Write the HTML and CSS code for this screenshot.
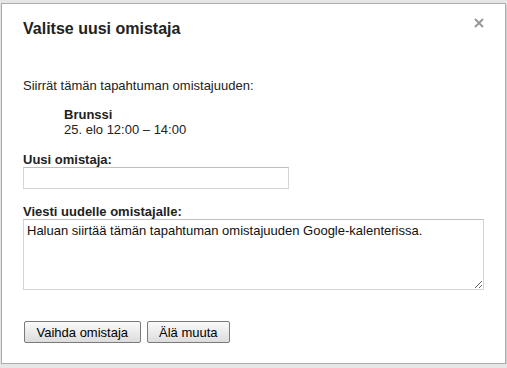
FILE: index.html
```html
<!DOCTYPE html>
<html lang="fi">
<head>
<meta charset="UTF-8">
<title>Valitse uusi omistaja</title>
<link rel="stylesheet" href="styles.css">
</head>
<body>
<div class="dialog">
    <div class="dialog-header">
        <h1 class="dialog-title">Valitse uusi omistaja</h1>
        <button class="close-btn" title="Sulje">
            <svg width="10" height="10" viewBox="0 0 10 10"><path d="M1 1L9 9M9 1L1 9" stroke="#999" stroke-width="2"/></svg>
        </button>
    </div>
    <p class="intro">Siirrät tämän tapahtuman omistajuuden:</p>
    <div class="event">
        <div class="event-name">Brunssi</div>
        <div class="event-time">25. elo 12:00 – 14:00</div>
    </div>
    <label class="field-label" for="owner">Uusi omistaja:</label>
    <input class="owner-input" id="owner" type="text">
    <label class="field-label" for="message">Viesti uudelle omistajalle:</label>
    <textarea class="message-input" id="message">Haluan siirtää tämän tapahtuman omistajuuden Google-kalenterissa.</textarea>
    <div class="actions">
        <button class="btn">Vaihda omistaja</button>
        <button class="btn">Älä muuta</button>
    </div>
</div>
</body>
</html>
```
FILE: styles.css
```css
body {
    margin: 0;
    padding: 3px 0 0 1px;
    background-color: #e6e6e6;
    font-family: 'Liberation Sans', Arial, sans-serif;
    font-size: 13px;
    line-height: 15px;
    color: #222;
    overflow: hidden;
}
.dialog {
    width: 462px;
    padding: 15px 20px 20px 21px;
    background-color: #fff;
    border: 1px solid #acacac;
    box-shadow: 1px 2px 2px rgba(0, 0, 0, 0.15);
}
.dialog-header {
    display: flex;
    justify-content: space-between;
    align-items: flex-start;
}
.dialog-title {
    margin: 0;
    font-size: 16px;
    line-height: 20px;
    font-weight: 700;
    color: #222;
}
.close-btn {
    margin: -1px 1px 0 0;
    padding: 0;
    border: none;
    background: none;
    width: 10px;
    height: 10px;
    cursor: pointer;
}
.close-btn svg {
    display: block;
}
.intro {
    margin: 39px 0 0;
}
.event {
    margin: 14px 0 0 41px;
}
.event-name {
    font-weight: 700;
}
.field-label {
    display: block;
    margin-top: 15px;
    font-weight: 700;
}
.owner-input {
    display: block;
    box-sizing: border-box;
    width: 266px;
    height: 22px;
    margin: 0;
    border: 1px solid #d4d4d4;
    border-top-color: #c0c0c0;
    font: inherit;
}
.message-input {
    display: block;
    box-sizing: border-box;
    width: 461px;
    height: 71px;
    margin: 0;
    padding: 3px;
    border: 1px solid #d4d4d4;
    border-top-color: #c0c0c0;
    font-family: inherit;
    font-size: 13px;
    line-height: 15px;
    color: #111;
    resize: both;
}
.actions {
    display: flex;
    gap: 6px;
    margin-top: 31px;
    padding-left: 1px;
}
.btn {
    height: 22px;
    padding: 0 11.5px;
    border: 1px solid #7a7a7a;
    border-radius: 2px;
    background: linear-gradient(#fafafa, #dcdcdc);
    font-family: inherit;
    font-size: 13px;
    color: #000;
    cursor: pointer;
}
```
